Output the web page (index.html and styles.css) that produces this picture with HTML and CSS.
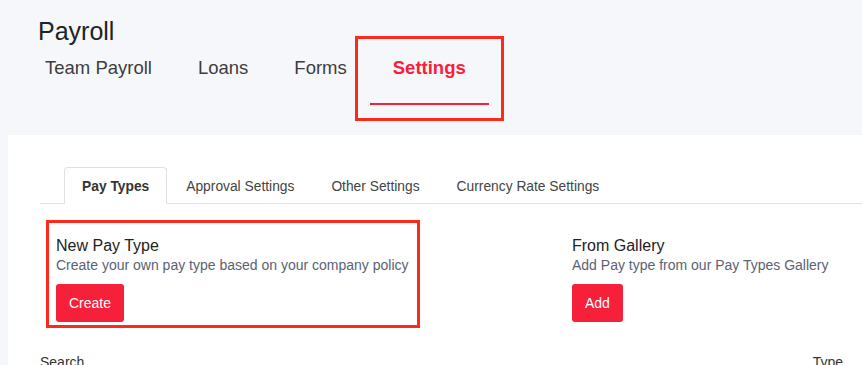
FILE: index.html
```html
<!DOCTYPE html>
<html>
<head>
<meta charset="UTF-8">
<link rel="stylesheet" href="styles.css">
<title>Payroll Settings</title>
</head>
<body>
  <div class="page-head">
    <h1 class="page-title">Payroll</h1>
    <div class="main-nav">
      <a href="#" class="main-link">Team Payroll</a>
      <a href="#" class="main-link">Loans</a>
      <a href="#" class="main-link">Forms</a>
      <a href="#" class="main-link active">Settings<span class="mark mark-nav"></span></a>
    </div>
  </div>

  <div class="card">
    <div class="tabs">
      <a href="#" class="tab active">Pay Types</a>
      <a href="#" class="tab">Approval Settings</a>
      <a href="#" class="tab">Other Settings</a>
      <a href="#" class="tab">Currency Rate Settings</a>
    </div>

    <div class="options">
      <div class="option">
        <span class="mark mark-option"></span>
        <h3 class="option-title">New Pay Type</h3>
        <p class="option-text">Create your own pay type based on your company policy</p>
        <button class="btn">Create</button>
      </div>
      <div class="option">
        <h3 class="option-title">From Gallery</h3>
        <p class="option-text">Add Pay type from our Pay Types Gallery</p>
        <button class="btn">Add</button>
      </div>
    </div>

    <div class="filters">
      <label class="filter-label">Search</label>
      <label class="filter-label">Type</label>
    </div>
  </div>
</body>
</html>
```

FILE: styles.css
```css
body {
  margin: 0;
  background-color: #f6f7fb;
  font-family: "Liberation Sans", Arial, sans-serif;
  overflow: hidden;
}

.page-head {
  padding: 16px 0 0 38px;
}
.page-title {
  margin: 0;
  font-size: 25px;
  font-weight: 400;
  line-height: 30px;
  color: #222;
}
.main-nav {
  display: flex;
  margin-left: -16px;
  padding-top: 10px;
}
.main-link {
  position: relative;
  padding: 0 23px 23px;
  font-size: 18.5px;
  line-height: 24px;
  color: #3d3d3d;
  text-decoration: none;
  border-bottom: 2px solid transparent;
}
.main-link.active {
  color: #f7203b;
  font-weight: bold;
  border-bottom-color: #f7203b;
}

/* red highlight boxes */
.mark {
  position: absolute;
  border: 3px solid #fb2a1c;
}
.mark-nav {
  left: -15px;
  right: -15px;
  top: -20px;
  bottom: -18px;
}
.mark-option {
  left: 6px;
  top: -16px;
  width: 368px;
  height: 102px;
}

.card {
  margin-left: 8px;
  margin-top: 30px;
  background-color: #fff;
  padding: 32px 0 0 32px;
  min-height: 300px;
}

.tabs {
  display: flex;
  gap: 1px;
  padding-left: 24px;
  border-bottom: 1px solid #dee2e6;
}
.tab {
  padding: 0 17px;
  height: 35px;
  line-height: 37px;
  margin-bottom: -1px;
  font-size: 13.8px;
  color: #444;
  text-decoration: none;
  border: 1px solid transparent;
  border-radius: 4px 4px 0 0;
}
.tab.active {
  font-weight: bold;
  color: #333;
  background-color: #fff;
  border-color: #dee2e6 #dee2e6 #fff;
}

.options {
  display: grid;
  grid-template-columns: 516px 516px;
  padding-top: 32px;
}
.option {
  position: relative;
  padding-left: 16px;
}
.option-title {
  margin: 0;
  font-size: 16px;
  font-weight: 400;
  line-height: 19px;
  color: #222;
}
.option-text {
  margin: 0 0 9px;
  font-size: 14px;
  line-height: 20px;
  color: #5b6273;
}
.btn {
  display: block;
  height: 38px;
  padding: 0 13px;
  border: none;
  border-radius: 3px;
  background-color: #f7203b;
  color: #fff;
  font-family: inherit;
  font-size: 14px;
}

.filters {
  display: flex;
  justify-content: space-between;
  width: 803px;
  padding-top: 30px;
}
.filter-label {
  font-size: 14px;
  line-height: 20px;
  color: #333;
}
```
